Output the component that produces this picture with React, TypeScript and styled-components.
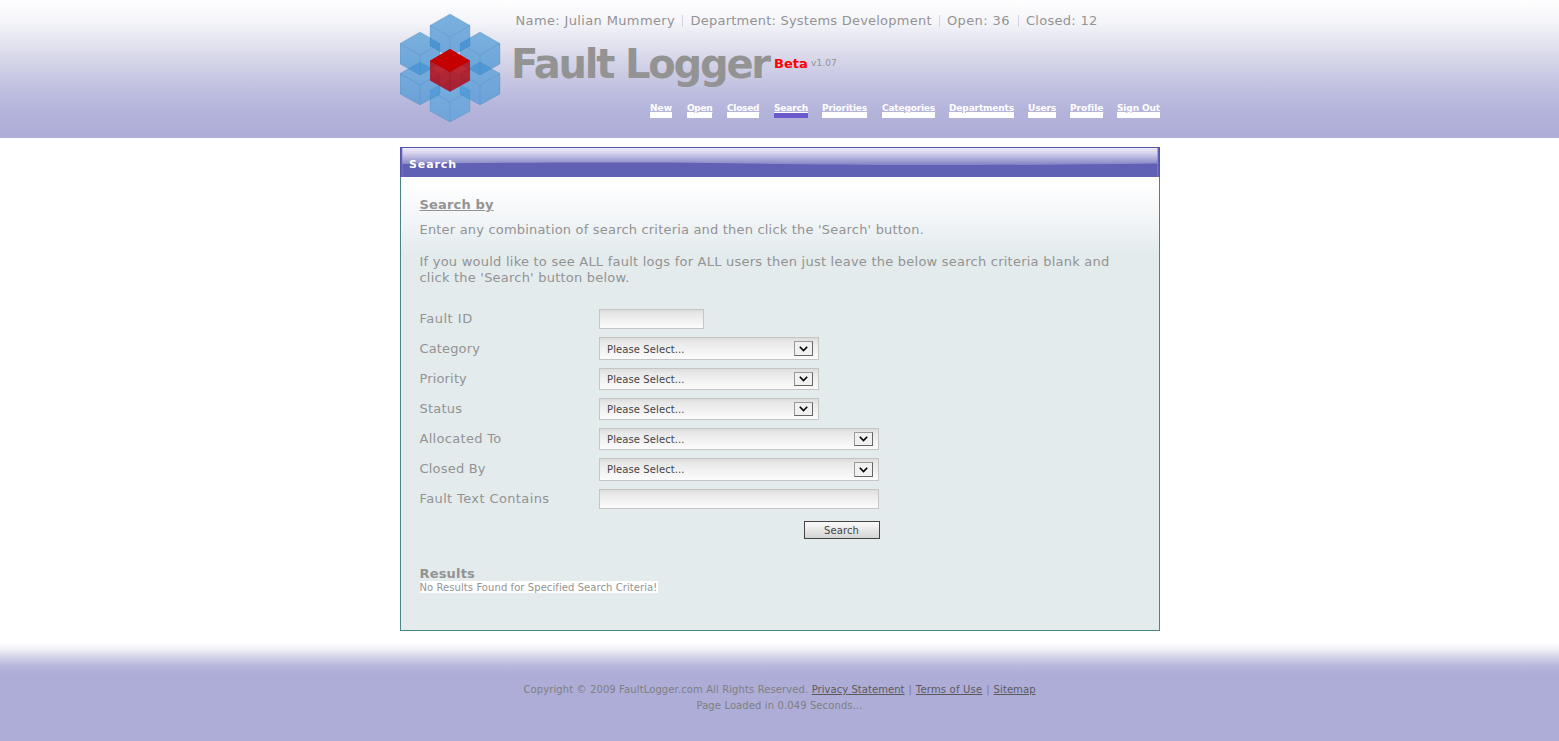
import React from 'react';
import styled, { createGlobalStyle } from 'styled-components';

const GlobalStyle = createGlobalStyle`
  * { box-sizing: border-box; }
  body {
    margin: 0;
    background: #fff;
    color: #939393;
    font: 13px/16px 'DejaVu Sans', Verdana, sans-serif;
  }
`;

const Page = styled.div`
  display: flex;
  flex-direction: column;
  height: 741px;
  overflow: hidden;
`;

const Column = styled.div`
  width: 761px;
  padding-left: 1px;
  margin: 0 auto;
`;

const Text = styled.span<{ $ls?: number }>`
  white-space: nowrap;
  letter-spacing: ${(p) => p.$ls ?? 0}px;
`;

const Header = styled.header`
  height: 138px;
  background: linear-gradient(#fefeff 0, #f7f7fb 18px, #e6e6f1 40px, #cfcfe6 68px, #bdbde0 94px, #b2b2da 116px, #adadd8 138px);
`;

const HeaderRow = styled(Column)`
  display: flex;
`;

const Logo = styled.svg`
  display: block;
  flex: none;
  width: 101px;
  height: 110px;
  margin-top: 13px;
`;

const Masthead = styled.div`
  flex: 1;
  display: flex;
  flex-direction: column;
  padding-top: 13px;
`;

const Meta = styled.div`
  display: flex;
  height: 16px;
  padding-left: 14.5px;
`;

const MetaItem = styled(Text)<{ $w: number }>`
  flex: none;
  width: ${(p) => p.$w}px;
`;

const MetaBar = styled.i`
  flex: none;
  width: 1px;
  height: 12px;
  margin: 2px 7.5px 0 6px;
  background: #d4d4e2;
`;

const Brand = styled.div`
  display: flex;
  align-items: center;
  height: 48px;
  margin-top: 11px;
  padding-left: 10px;
`;

const Title = styled.h1`
  flex: none;
  width: 263px;
  margin: 0;
  font-size: 40px;
  line-height: 48px;
  letter-spacing: -2.2px;
  white-space: nowrap;
`;

const Beta = styled.b`
  flex: none;
  width: 37px;
  color: #f00;
`;

const Version = styled.span`
  font-size: 9px;
  letter-spacing: 0.1px;
  line-height: 12px;
  padding-bottom: 2px;
`;

const Nav = styled.nav`
  display: flex;
  margin: 14px 0 0 149px;
`;

const NavLink = styled.a<{ $w: number; $ls: number; $gap: number; $active?: boolean }>`
  width: ${(p) => p.$w}px;
  height: 16px;
  margin-right: ${(p) => p.$gap}px;
  border-bottom: 5px solid ${(p) => (p.$active ? '#6a5acd' : '#fff')};
  color: #fff;
  font-size: 9px;
  font-weight: 700;
  line-height: 12px;
  letter-spacing: ${(p) => p.$ls}px;
  white-space: nowrap;
  text-decoration: underline;
`;

const Main = styled.main`
  height: 502px;
  padding-top: 9px;
`;

const Card = styled.section`
  height: 484px;
  border: 1px solid #4a8586;
  border-top: 0;
  background: linear-gradient(#fff 0, #fff 36px, #f4f6f8 68px, #e3ebed 108px);
`;

const CardTitle = styled.h2`
  position: relative;
  height: 30px;
  margin: 0 -1px;
  padding: 8px 0 0 8px;
  border: 1px solid #5454ae;
  border-bottom: 0;
  background: #6060b5;
  color: #fff;
  font-size: 11px;
  line-height: 17px;
  letter-spacing: 0.9px;
`;

const Gloss = styled.svg`
  position: absolute;
  left: 1px;
  top: 0;
  width: 756px;
  height: 29px;
`;

const TitleText = styled.span`
  position: relative;
`;

const CardBody = styled.div`
  padding: 20px 18.5px 0 18.5px;
`;

const Heading = styled.h3<{ $underline?: boolean }>`
  margin: 0;
  font-size: 13px;
  line-height: 16px;
  letter-spacing: 0.17px;
  text-decoration: ${(p) => (p.$underline ? 'underline' : 'none')};
`;

const Paragraph = styled.p<{ $top: number; $bottom: number }>`
  display: flex;
  flex-direction: column;
  margin: ${(p) => p.$top}px 0 ${(p) => p.$bottom}px;
`;

const FormRow = styled.div`
  display: grid;
  grid-template-columns: 179.5px 1fr;
  align-items: center;
  height: 30px;
`;

const fieldFill = 'linear-gradient(#dcdcdc, #e8e8e8 4px, #fcfcfc)';

const TextField = styled.input<{ $w: number }>`
  width: ${(p) => p.$w}px;
  height: 20px;
  padding: 0 7px;
  border: 1px solid #c5c5c5;
  border-radius: 0;
  background: ${fieldFill};
`;

const SelectBox = styled.div<{ $w: number; $h: number; $dy: number }>`
  display: flex;
  align-items: center;
  justify-content: space-between;
  width: ${(p) => p.$w}px;
  height: ${(p) => p.$h}px;
  margin-top: ${(p) => p.$dy}px;
  padding: 0 5px 0 7px;
  border: 1px solid #c5c5c5;
  background: ${fieldFill};
  color: #444;
  font-size: 10px;
`;

const SelectValue = styled(Text)<{ $drop: number }>`
  padding-top: ${(p) => p.$drop}px;
  line-height: 14px;
`;

const Arrow = styled.span<{ $tall: boolean }>`
  display: flex;
  align-items: center;
  justify-content: center;
  width: 19px;
  height: ${(p) => (p.$tall ? 15 : 14)}px;
  border: 1px solid;
  border-color: #999 #666 #666 #999;
  background: #f1f1f1;
`;

const ButtonRow = styled.div`
  display: flex;
  justify-content: flex-end;
  width: 460.5px;
  margin-top: 7px;
`;

const SearchButton = styled.button`
  width: 76px;
  height: 18px;
  padding: 2px 1px 0 0;
  border: 1px solid #444;
  border-radius: 0;
  background: linear-gradient(#fafafa, #d4d4d4);
  color: #444;
  font: 10px/14px 'DejaVu Sans', Verdana, sans-serif;
  letter-spacing: 0.1px;
`;

const Results = styled.div`
  padding-top: 27px;
`;

const ResultNote = styled.span`
  display: block;
  width: 238px;
  height: 12px;
  margin-top: -1px;
  background: #fff;
  font-size: 10px;
  line-height: 14px;
  letter-spacing: 0.075px;
  white-space: nowrap;
`;

const Footer = styled.footer`
  height: 101px;
  padding-top: 42px;
  background: linear-gradient(#fff 3px, #f1f1f7 9px, #d3d3e9 17px, #b9b9de 25px, #adadd8 34px);
  color: #807f80;
  font-size: 10px;
  text-align: center;
  letter-spacing: 0.11px;
`;

const FooterLink = styled.a<{ $ls: number }>`
  color: #5d5a5c;
  text-decoration: underline;
  letter-spacing: ${(p) => p.$ls}px;
`;

const Divider = styled.span`
  margin: 0 0.6px;
`;

function Cube({ x, y, fill }: { x: number; y: number; fill: string }) {
  return (
    <g transform={`translate(${x} ${y})`}>
      <path d="M0 0L20 11.5V32L0 43L-20 32V11.5Z" fill={fill} fillOpacity={0.64} />
      <path d="M0 0L20 11.5V32L0 43L-20 32V11.5ZM-20 11.5L0 23L20 11.5M0 23V43" fill="none" stroke="#2f6fa5" strokeOpacity={0.25} strokeWidth={0.8} />
    </g>
  );
}

const cubes: [number, number, string][] = [
  [50, 79, '#4c9fdb'],
  [20, 62, '#4496d6'],
  [80, 62, '#4496d6'],
  [20, 32, '#398ed2'],
  [80, 32, '#398ed2'],
  [50, 14, '#3388cf'],
];

const navItems: [string, number, number, number][] = [
  ['New', 22, 0, 15],
  ['Open', 25, -0.28, 15],
  ['Closed', 32, -0.25, 15],
  ['Search', 34, -0.14, 14],
  ['Priorities', 45, -0.17, 15],
  ['Categories', 53, -0.17, 14],
  ['Departments', 65, -0.13, 14],
  ['Users', 28, -0.1, 14],
  ['Profile', 33, -0.01, 14],
  ['Sign Out', 43, -0.11, 0],
];

const selects: [string, number, number, number, number][] = [
  ['Category', 220, 23, -1, 0.14],
  ['Priority', 220, 22, 0, 0.15],
  ['Status', 220, 22, 0, 0.2],
  ['Allocated To', 280, 22, 0, 0.3],
  ['Closed By', 280, 23, 1, 0.2],
];

export default function App() {
  return (
    <Page>
      <GlobalStyle />
      <Header>
        <HeaderRow>
          <Logo viewBox="0 13 101 110">
            {cubes.map(([x, y, fill]) => <Cube key={`${x}-${y}`} x={x} y={y} fill={fill} />)}
            <path d="M50 49L70 60.7V80.5L50 91.7L30 80.5V60.7Z" fill="#b5111c" fillOpacity={0.88} />
            <path d="M50 69L70 80.5L50 91.7L30 80.5Z" fill="#8c2035" fillOpacity={0.2} />
            <path d="M30 60.7L50 72V91.7" fill="none" stroke="#921824" strokeOpacity={0.6} strokeWidth={0.8} />
            <path d="M50 49L70 60.7L50 72L30 60.7Z" fill="#c40000" />
          </Logo>
          <Masthead>
            <Meta>
              <MetaItem $w={160.5} $ls={0.36}>Name: Julian Mummery</MetaItem>
              <MetaBar />
              <MetaItem $w={242} $ls={0.23}>Department: Systems Development</MetaItem>
              <MetaBar />
              <MetaItem $w={64.5} $ls={0.38}>Open: 36</MetaItem>
              <MetaBar />
              <MetaItem $w={72} $ls={0.28}>Closed: 12</MetaItem>
            </Meta>
            <Brand>
              <Title>Fault Logger</Title>
              <Beta>Beta</Beta>
              <Version>v1.07</Version>
            </Brand>
            <Nav>
              {navItems.map(([label, w, ls, gap]) => (
                <NavLink key={label} $w={w} $ls={ls} $gap={gap} $active={label === 'Search'}>{label}</NavLink>
              ))}
            </Nav>
          </Masthead>
        </HeaderRow>
      </Header>
      <Main>
        <Column>
          <Card>
            <CardTitle>
              <Gloss viewBox="0 0 756 29" preserveAspectRatio="none">
                <defs>
                  <linearGradient id="gloss" gradientUnits="userSpaceOnUse" x1="0" y1="0" x2="0" y2="17">
                    <stop offset="0" stopColor="#efebf8" />
                    <stop offset="0.3" stopColor="#d5d3ec" />
                    <stop offset="1" stopColor="#8181c5" />
                  </linearGradient>
                </defs>
                <path d="M0 0H756V15.5C620 17.5 480 17.5 380 16C280 14 130 14 0 16Z" fill="url(#gloss)" />
                <path d="M0.5 0V29" stroke="#8585c8" strokeOpacity={0.4} />
                <path d="M755.5 0V29" stroke="#8585c8" strokeOpacity={0.6} />
              </Gloss>
              <TitleText>Search</TitleText>
            </CardTitle>
            <CardBody>
              <Heading $underline>Search by</Heading>
              <Paragraph $top={9} $bottom={16}>
                <Text $ls={0.19}>Enter any combination of search criteria and then click the 'Search' button.</Text>
              </Paragraph>
              <Paragraph $top={0} $bottom={18}>
                <Text $ls={0.235}>If you would like to see ALL fault logs for ALL users then just leave the below search criteria blank and</Text>
                <Text $ls={0.219}>click the 'Search' button below.</Text>
              </Paragraph>
              <FormRow>
                <Text $ls={0.5}>Fault ID</Text>
                <TextField $w={105} aria-label="Fault ID" />
              </FormRow>
              {selects.map(([label, w, h, dy, ls]) => (
                <FormRow key={label}>
                  <Text $ls={ls}>{label}</Text>
                  <SelectBox $w={w} $h={h} $dy={dy}>
                    <SelectValue $ls={0.1} $drop={dy > 0 ? 0 : 2}>Please Select...</SelectValue>
                    <Arrow $tall={h === 23}>
                      <svg width="9" height="6" viewBox="0 0 9 6">
                        <path d="M0.8 0.8L4.5 4.5L8.2 0.8" fill="none" stroke="#000" strokeWidth="1.6" />
                      </svg>
                    </Arrow>
                  </SelectBox>
                </FormRow>
              ))}
              <FormRow>
                <Text $ls={0.38}>Fault Text Contains</Text>
                <TextField $w={280} aria-label="Fault Text Contains" />
              </FormRow>
              <ButtonRow>
                <SearchButton>Search</SearchButton>
              </ButtonRow>
              <Results>
                <Heading>Results</Heading>
                <ResultNote>No Results Found for Specified Search Criteria!</ResultNote>
              </Results>
            </CardBody>
          </Card>
        </Column>
      </Main>
      <Footer>
        <div>
          Copyright © 2009 FaultLogger.com All Rights Reserved. <FooterLink $ls={0.05}>Privacy Statement</FooterLink> <Divider>|</Divider> <FooterLink $ls={0.2}>Terms of Use</FooterLink> <Divider>|</Divider> <FooterLink $ls={0.08}>Sitemap</FooterLink>
        </div>
        <div>Page Loaded in 0.049 Seconds...</div>
      </Footer>
    </Page>
  );
}
